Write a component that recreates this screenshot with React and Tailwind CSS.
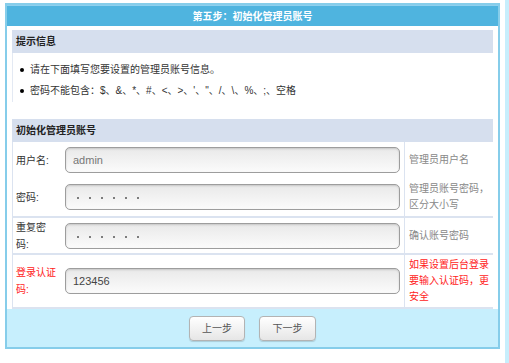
const font = { fontFamily: '"Liberation Sans", "Noto Sans CJK SC", sans-serif' };

function Dots() {
    return (
        <div className="flex items-center gap-[10px] pl-[11px] pt-[2px]">
            {[0, 1, 2, 3, 4, 5].map(i => (
                <span key={i} className="w-[2px] h-[2px] rounded-full bg-[#555]" />
            ))}
        </div>
    );
}

function Field({ children }) {
    return (
        <div className="h-[26px] w-full rounded-[5px] border border-[#9d9d9d] bg-gradient-to-b from-[#e9e9e9] to-[#fbfbfb] shadow-[inset_0_1px_2px_rgba(0,0,0,0.15)] flex items-center">
            {children}
        </div>
    );
}

function Row({ label, red, input, note, h, top }) {
    return (
        <div className={`grid grid-cols-[49px_343px_89px] ${h} ${top ? 'border-t-2 border-[#dbe3f0]' : ''}`}>
            <div className={`border-l border-[#dbe3f0] pl-[3px] flex items-center leading-[17px] ${red ? 'text-[#f22]' : 'text-[#333]'}`}>
                <span>{label}</span>
            </div>
            <div className="pl-[4px] pr-[4px] flex items-center">
                <Field>{input}</Field>
            </div>
            <div className={`border-l border-[#dbe3f0] pl-[4px] flex items-center leading-[16px] ${red ? 'text-[#f22]' : 'text-[#888]'}`}>
                <span>{note}</span>
            </div>
        </div>
    );
}

export default function App() {
    return (
        <div className="w-[509px] h-[363px] bg-white flex text-[10px]" style={font}>
            <div className="w-[505px] pl-[5px] pt-[3px]">
                <div className="w-[495px] h-[346px] border-2 border-[#86cdea] flex flex-col">
                    <div className="h-[22px] bg-[#4fb4df] border-t border-[#8fd0ee] text-white font-bold flex items-center justify-center">
                        第五步：初始化管理员账号
                    </div>

                    <div className="flex-1 bg-white px-[5px] pt-[4px]">
                        <div className="h-[23px] bg-[#d6dfee] flex items-center pl-[4px] font-bold text-[#222]">提示信息</div>
                        <div className="h-[49px] border-l border-[#e3e9f3] pt-[6px] text-[#333] leading-[21px]">
                            <div className="flex items-center">
                                <span className="w-[4px] h-[4px] rounded-full bg-black ml-[7px] mr-[6px]" />
                                请在下面填写您要设置的管理员账号信息。
                            </div>
                            <div className="flex items-center">
                                <span className="w-[4px] h-[4px] rounded-full bg-black ml-[7px] mr-[6px]" />
                                密码不能包含：$、&amp;、*、#、&lt;、&gt;、'、"、/、\、%、;、空格
                            </div>
                        </div>

                        <div className="mt-[17px] h-[23px] bg-[#d6dfee] flex items-center pl-[4px] font-bold text-[#222]">初始化管理员账号</div>
                        <div className="border-b-2 border-[#dbe3f0]">
                            <Row h="h-[36px]" label="用户名:" note="管理员用户名"
                                input={<span className="pl-[7px] text-[11px] text-[#777]">admin</span>} />
                            <Row h="h-[38px]" label="密码:" note={<>管理员账号密码，<br />区分大小写</>}
                                input={<Dots />} />
                            <Row h="h-[37px]" top label={<>重复密<br />码:</>} note="确认账号密码"
                                input={<Dots />} />
                            <Row h="h-[54px]" top red label={<>登录认证<br />码:</>}
                                note={<>如果设置后台登录<br />要输入认证码，更<br />安全</>}
                                input={<span className="pl-[7px] text-[11px] text-[#444]">123456</span>} />
                        </div>
                    </div>

                    <div className="h-[39px] bg-[#c7effd] flex items-center justify-center gap-[14px]">
                        <button className="w-[56px] h-[25px] rounded-[4px] border border-[#b3b3b3] bg-gradient-to-b from-white to-[#e6e6e6] shadow-[0_1px_1px_rgba(0,0,0,0.15)] text-[#555]">上一步</button>
                        <button className="w-[57px] h-[25px] rounded-[4px] border border-[#b3b3b3] bg-gradient-to-b from-white to-[#e6e6e6] shadow-[0_1px_1px_rgba(0,0,0,0.15)] text-[#555]">下一步</button>
                    </div>
                </div>
            </div>
            <div className="w-[4px] h-full bg-[#c8eefc]" />
        </div>
    );
}
